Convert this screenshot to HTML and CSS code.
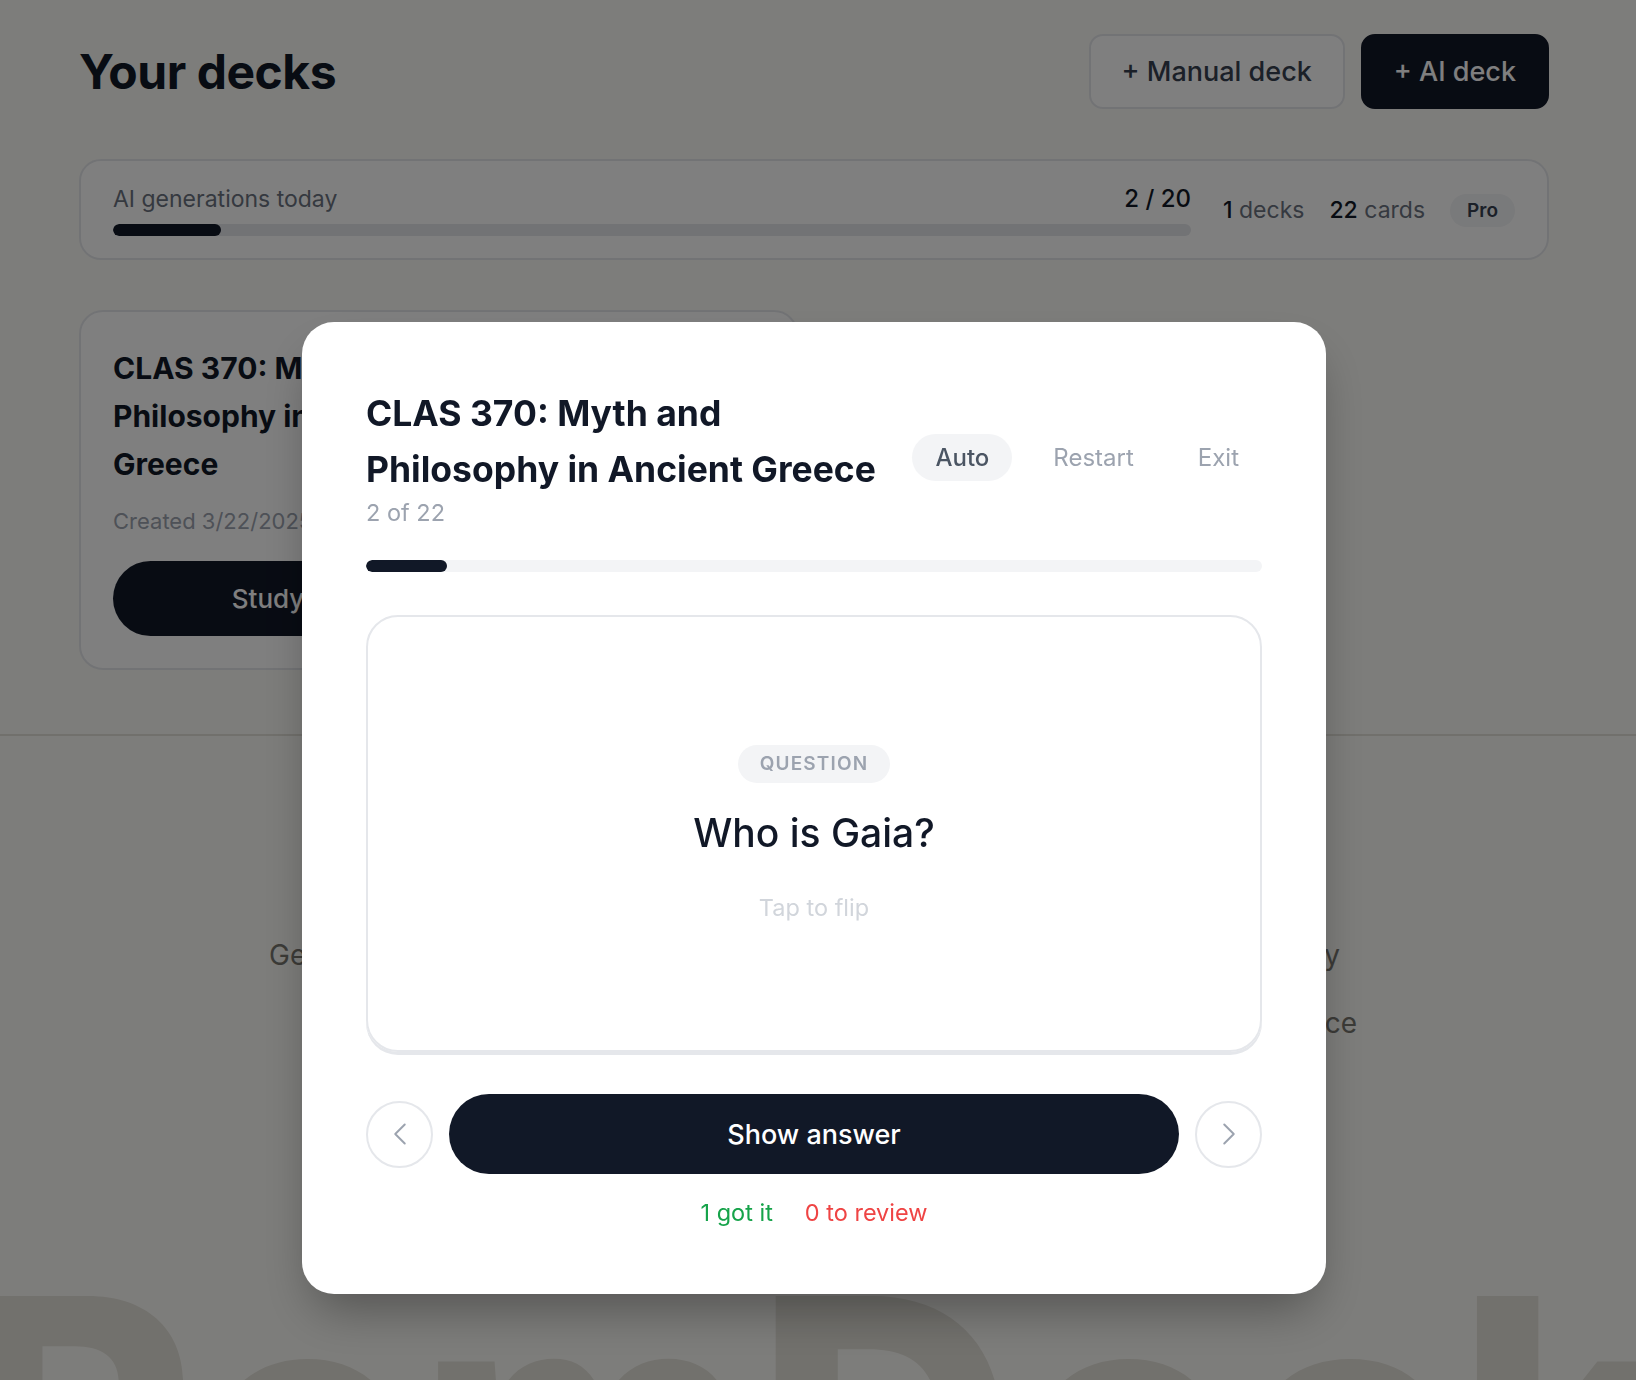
FILE: index.html
```html
<!DOCTYPE html>
<html lang="en">
<head>
<meta charset="utf-8">
<title>Your decks</title>
<link rel="stylesheet" href="styles.css">
</head>
<body>
<div class="page">
  <header class="top">
    <h1 class="page-title">Your decks</h1>
    <div class="actions">
      <button class="btn btn-outline">+ Manual deck</button>
      <button class="btn btn-dark">+ AI deck</button>
    </div>
  </header>

  <section class="usage">
    <div class="usage-main">
      <div class="usage-row"><span>AI generations today</span><span class="usage-val">2 / 20</span></div>
      <div class="track"><div class="fill" style="width:10%"></div></div>
    </div>
    <div class="usage-stats">
      <span><b>1</b> decks</span>
      <span><b>22</b> cards</span>
      <span class="pro">Pro</span>
    </div>
  </section>

  <section class="grid">
    <article class="deck">
      <h2 class="deck-title">CLAS 370: Myth and<br>Philosophy in Ancient<br>Greece</h2>
      <p class="created">Created 3/22/2025</p>
      <div class="deck-actions">
        <button class="study">Study</button>
        <button class="edit">Edit</button>
      </div>
    </article>
  </section>
</div>

<footer class="footer">
  <div class="footer-line">Generate a deck from your notes, then review it every day</div>
  <div class="footer-line second">Spaced repetition keeps each card fresh and builds confidence</div>
  <div class="brand">RemDeck</div>
</footer>

<div class="overlay">
  <div class="modal">
    <div class="m-head">
      <div class="m-title">
        <h2 class="m-name">CLAS 370: Myth and<br>Philosophy in Ancient Greece</h2>
        <div class="m-count">2 of 22</div>
      </div>
      <div class="m-controls">
        <button class="ctl on">Auto</button>
        <button class="ctl">Restart</button>
        <button class="ctl">Exit</button>
      </div>
    </div>
    <div class="m-track"><div class="m-fill" style="width:9.09%"></div></div>

    <div class="card">
      <span class="tag">QUESTION</span>
      <div class="question">Who is Gaia?</div>
      <div class="hint">Tap to flip</div>
    </div>

    <div class="nav">
      <button class="circle" aria-label="Previous">
        <svg width="38" height="38" viewBox="0 0 24 24" fill="none" stroke="#9ca3af" stroke-width="1.25" stroke-linecap="round" stroke-linejoin="round"><path d="M15 18l-6-6 6-6"/></svg>
      </button>
      <button class="show">Show answer</button>
      <button class="circle" aria-label="Next">
        <svg width="38" height="38" viewBox="0 0 24 24" fill="none" stroke="#9ca3af" stroke-width="1.25" stroke-linecap="round" stroke-linejoin="round"><path d="M9 18l6-6-6-6"/></svg>
      </button>
    </div>

    <div class="tally">
      <span class="got">1 got it</span>
      <span class="review">0 to review</span>
    </div>
  </div>
</div>
</body>
</html>
```

FILE: styles.css
```css
html, body {
  margin: 0;
  height: 1380px;
  overflow: hidden;
}
body {
  font-family: Inter, "Noto Sans", "Liberation Sans", sans-serif;
  background: #fbfaf6;
  color: #111827;
}
button {
  font-family: inherit;
  cursor: pointer;
}

/* ---------- page ---------- */
.page {
  width: 1470px;
  margin-left: 79px;
  padding: 34px 0 64px;
}
.top {
  display: flex;
  justify-content: space-between;
  align-items: center;
}
.page-title {
  margin: 0;
  font-size: 48px;
  font-weight: 700;
  letter-spacing: -0.01em;
  color: #111827;
}
.actions {
  display: flex;
  gap: 16px;
}
.btn {
  height: 75px;
  padding: 0 31px;
  border-radius: 14px;
  font-size: 27px;
  font-weight: 500;
}
.btn-outline {
  background: #fff;
  border: 2px solid #e5e7eb;
  color: #374151;
}
.btn-dark {
  background: #111827;
  border: 2px solid #111827;
  color: #fff;
}

.usage {
  margin-top: 50px;
  display: flex;
  align-items: center;
  gap: 32px;
  background: #fff;
  border: 2px solid #e5e7eb;
  border-radius: 22px;
  padding: 23px 32px 22px;
}
.usage-main {
  flex: 1;
}
.usage-row {
  display: flex;
  justify-content: space-between;
  align-items: baseline;
  font-size: 23px;
  line-height: 30px;
  color: #6b7280;
}
.usage-val {
  color: #111827;
  font-size: 24px;
  font-weight: 500;
}
.track {
  margin-top: 10px;
  height: 12px;
  background: #e5e7eb;
  border-radius: 6px;
  overflow: hidden;
}
.fill {
  height: 100%;
  background: #111827;
  border-radius: 6px;
}
.usage-stats {
  display: flex;
  align-items: center;
  gap: 25px;
  font-size: 23px;
  color: #6b7280;
}
.usage-stats b {
  color: #111827;
  font-weight: 500;
}
.pro {
  height: 33px;
  line-height: 33px;
  padding: 0 17px;
  border-radius: 17px;
  background: #f3f4f6;
  color: #374151;
  font-size: 19px;
  font-weight: 600;
}

.grid {
  margin-top: 50px;
  display: grid;
  grid-template-columns: 1fr 1fr;
  gap: 32px;
}
.deck {
  background: #fff;
  border: 2px solid #e5e7eb;
  border-radius: 24px;
  padding: 32px;
}
.deck-title {
  margin: 0;
  font-size: 30px;
  line-height: 48px;
  font-weight: 700;
  color: #111827;
}
.created {
  margin: 18px 0 0;
  font-size: 22px;
  line-height: 30px;
  color: #9ca3af;
}
.deck-actions {
  margin-top: 25px;
  display: flex;
  gap: 16px;
}
.study {
  width: 310px;
  height: 75px;
  border: 0;
  border-radius: 38px;
  background: #111827;
  color: #fff;
  font-size: 26px;
  font-weight: 500;
}
.edit {
  flex: 1;
  height: 75px;
  border: 2px solid #e5e7eb;
  border-radius: 38px;
  background: #fff;
  color: #374151;
  font-size: 26px;
  font-weight: 500;
}

/* ---------- footer ---------- */
.footer {
  border-top: 2px solid #e2e0d8;
  padding-top: 199px;
}
.footer-line {
  width: 1071px;
  margin-left: 269px;
  font-size: 28px;
  line-height: 40px;
  color: #77766f;
  text-align: justify;
  text-align-last: justify;
}
.footer-line.second {
  width: 980px;
  margin-left: 377px;
  margin-top: 28px;
}
.brand {
  margin-top: 204px;
  margin-left: -40px;
  font-size: 360px;
  line-height: 1;
  font-weight: 800;
  letter-spacing: 0.01em;
  color: #e4e2da;
  white-space: nowrap;
}

/* ---------- modal ---------- */
.overlay {
  position: fixed;
  inset: 0;
  background: rgba(0, 0, 0, 0.5);
  display: flex;
  justify-content: center;
  align-items: flex-start;
  padding: 322px 8px 0 0;
  box-sizing: border-box;
}
.modal {
  width: 1024px;
  box-sizing: border-box;
  background: #fff;
  border-radius: 32px;
  padding: 64px 64px 66px;
  box-shadow: 0 25px 50px -12px rgba(0, 0, 0, 0.35);
}
.m-head {
  display: flex;
  align-items: center;
  gap: 30px;
}
.m-title {
  flex: 1;
}
.m-name {
  margin: 0;
  font-size: 35.5px;
  line-height: 56px;
  font-weight: 700;
  color: #111827;
}
.m-count {
  font-size: 23.5px;
  line-height: 30px;
  color: #9ca3af;
}
.m-controls {
  display: flex;
  gap: 18px;
}
.ctl {
  height: 47px;
  padding: 0 23px;
  border: 0;
  border-radius: 24px;
  background: transparent;
  color: #9ca3af;
  font-size: 24px;
}
.ctl.on {
  background: #f3f4f6;
  color: #4b5563;
  font-weight: 500;
}
.m-track {
  margin-top: 32px;
  height: 12px;
  background: #f3f4f6;
  border-radius: 6px;
  overflow: hidden;
}
.m-fill {
  height: 100%;
  background: #111827;
  border-radius: 6px;
}

.card {
  margin-top: 43px;
  height: 437px;
  box-sizing: border-box;
  border: 2px solid #e5e7eb;
  border-radius: 32px;
  box-shadow: 0 3px 0 #e5e7eb;
  display: flex;
  flex-direction: column;
  align-items: center;
  justify-content: center;
}
.tag {
  height: 38px;
  line-height: 38px;
  padding: 0 22px;
  border-radius: 19px;
  background: #f3f4f6;
  color: #9ca3af;
  font-size: 19px;
  font-weight: 600;
  letter-spacing: 0.06em;
}
.question {
  margin-top: 26px;
  font-size: 39px;
  line-height: 48px;
  font-weight: 500;
  color: #111827;
}
.hint {
  margin-top: 36px;
  font-size: 23.5px;
  line-height: 30px;
  color: #d1d5db;
}

.nav {
  margin-top: 42px;
  display: flex;
  align-items: center;
  gap: 16px;
}
.circle {
  width: 67px;
  height: 67px;
  flex: none;
  padding: 0;
  border: 2px solid #e5e7eb;
  border-radius: 50%;
  background: #fff;
  display: flex;
  align-items: center;
  justify-content: center;
}
.show {
  flex: 1;
  height: 80px;
  border: 0;
  border-radius: 40px;
  background: #111827;
  color: #fff;
  font-size: 27px;
  font-weight: 500;
}
.tally {
  margin-top: 24px;
  display: flex;
  justify-content: center;
  gap: 32px;
  font-size: 23.5px;
  line-height: 30px;
}
.got {
  color: #16a34a;
}
.review {
  color: #ef4444;
}
```
